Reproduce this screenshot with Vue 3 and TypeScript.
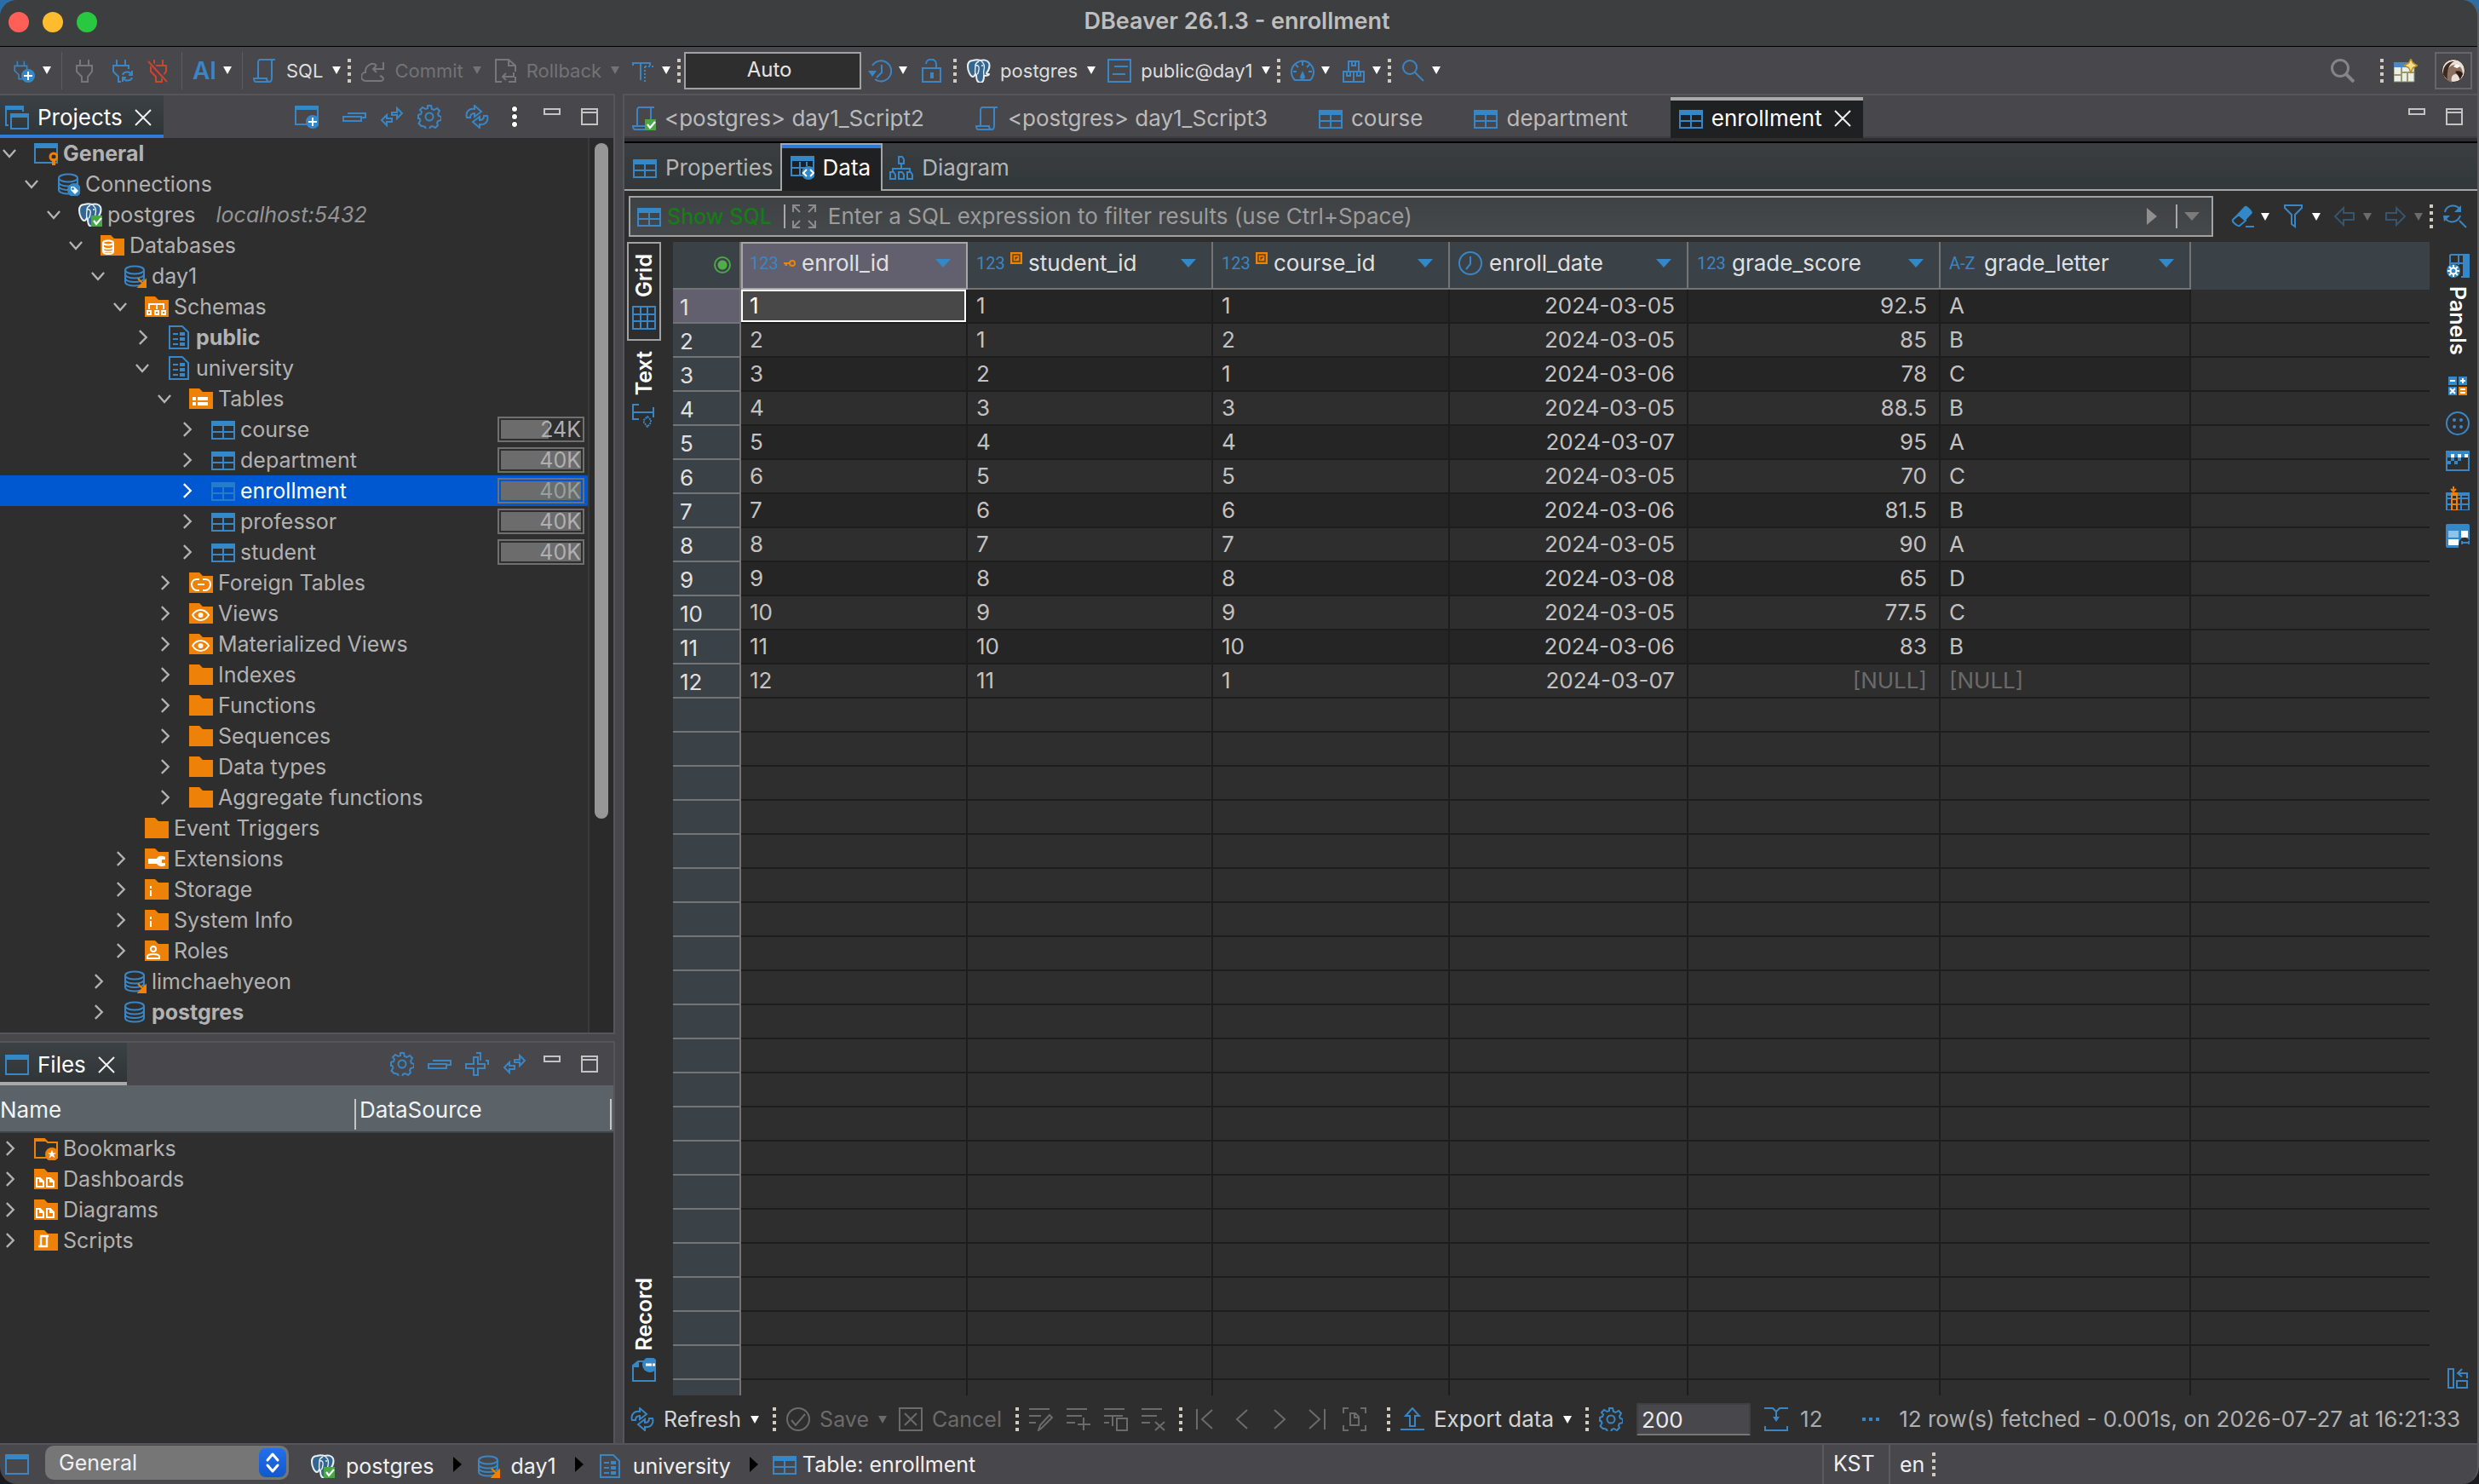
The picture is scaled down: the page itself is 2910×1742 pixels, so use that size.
<script setup lang="ts">
import { h, ref, type FunctionalComponent } from 'vue'

const Ico: FunctionalComponent<{ n: string }> = (props) =>
  h('svg', { class: 'ico', viewBox: '0 0 28 28', 'aria-hidden': 'true' }, [h('use', { href: '#i-' + props.n })])
Ico.props = ['n']

interface TreeNode {
  level: number
  open?: boolean
  leaf?: boolean
  icon: string
  text: string
  bold?: boolean
  note?: string
  size?: string
  fill?: number
  selected?: boolean
}

const tree: TreeNode[] = [
  { level: 0, open: true, icon: 'project', text: 'General', bold: true },
  { level: 1, open: true, icon: 'connections', text: 'Connections' },
  { level: 2, open: true, icon: 'pg-ok', text: 'postgres', note: 'localhost:5432' },
  { level: 3, open: true, icon: 'f-db', text: 'Databases' },
  { level: 4, open: true, icon: 'db-link', text: 'day1' },
  { level: 5, open: true, icon: 'f-schema', text: 'Schemas' },
  { level: 6, icon: 'schema', text: 'public', bold: true },
  { level: 6, open: true, icon: 'schema', text: 'university' },
  { level: 7, open: true, icon: 'f-tables', text: 'Tables' },
  { level: 8, icon: 'table', text: 'course', size: '24K', fill: 60 },
  { level: 8, icon: 'table', text: 'department', size: '40K', fill: 100 },
  { level: 8, icon: 'table', text: 'enrollment', size: '40K', fill: 100, selected: true },
  { level: 8, icon: 'table', text: 'professor', size: '40K', fill: 100 },
  { level: 8, icon: 'table', text: 'student', size: '40K', fill: 100 },
  { level: 7, icon: 'f-foreign', text: 'Foreign Tables' },
  { level: 7, icon: 'f-view', text: 'Views' },
  { level: 7, icon: 'f-view', text: 'Materialized Views' },
  { level: 7, icon: 'folder', text: 'Indexes' },
  { level: 7, icon: 'folder', text: 'Functions' },
  { level: 7, icon: 'folder', text: 'Sequences' },
  { level: 7, icon: 'folder', text: 'Data types' },
  { level: 7, icon: 'folder', text: 'Aggregate functions' },
  { level: 5, leaf: true, icon: 'folder', text: 'Event Triggers' },
  { level: 5, icon: 'f-ext', text: 'Extensions' },
  { level: 5, icon: 'f-info', text: 'Storage' },
  { level: 5, icon: 'f-info', text: 'System Info' },
  { level: 5, icon: 'f-user', text: 'Roles' },
  { level: 4, icon: 'db-link', text: 'limchaehyeon' },
  { level: 4, icon: 'db', text: 'postgres', bold: true },
]

const files = [
  { icon: 'f-bookmark', text: 'Bookmarks' },
  { icon: 'f-docs', text: 'Dashboards' },
  { icon: 'f-docs', text: 'Diagrams' },
  { icon: 'f-script', text: 'Scripts' },
]

const columns = [
  { name: 'enroll_id', type: '123', mark: 'key' },
  { name: 'student_id', type: '123', mark: 'ref' },
  { name: 'course_id', type: '123', mark: 'ref' },
  { name: 'enroll_date', type: 'date', mark: '' },
  { name: 'grade_score', type: '123', mark: '' },
  { name: 'grade_letter', type: 'A-Z', mark: '' },
]

const rows: string[][] = [
  ['1', '1', '1', '2024-03-05', '92.5', 'A'],
  ['2', '1', '2', '2024-03-05', '85', 'B'],
  ['3', '2', '1', '2024-03-06', '78', 'C'],
  ['4', '3', '3', '2024-03-05', '88.5', 'B'],
  ['5', '4', '4', '2024-03-07', '95', 'A'],
  ['6', '5', '5', '2024-03-05', '70', 'C'],
  ['7', '6', '6', '2024-03-06', '81.5', 'B'],
  ['8', '7', '7', '2024-03-05', '90', 'A'],
  ['9', '8', '8', '2024-03-08', '65', 'D'],
  ['10', '9', '9', '2024-03-05', '77.5', 'C'],
  ['11', '10', '10', '2024-03-06', '83', 'B'],
  ['12', '11', '1', '2024-03-07', '[NULL]', '[NULL]'],
]
const blankRows = 21

const filter = ref('')
const fetchSize = ref('200')
const project = ref('General')
</script>

<template>
  <svg class="defs" aria-hidden="true">
    <defs>
      <g id="elephant">
        <path d="M7 2C3 2 1 5 1 9c0 5 3 12 6 12 2 0 2-2 3-3l1 1c0 4 1 9 5 9 3 0 4-3 4-8 3 0 6-1 6-2-2 0-3 0-3-1 3-4 4-9 3-12-2-4-7-4-10-3C13 1 10 1 7 2z" fill="#336791" stroke="#e8eef4" stroke-width="2" stroke-linejoin="round" />
        <path d="M10 18c-1-4 0-6 0-10 0-2 2-4 4-5M17 3c3 2 4 6 3 10-1 3 0 4 0 7M10 8c3-1 5 1 4 5-1 3 0 4-2 5M17 8h2" fill="none" stroke="#e8eef4" stroke-width="1.4" />
      </g>
      <g id="okmark"><rect x="15" y="15" width="14" height="14" fill="#4aa843" /><path d="M18 21l3 4 6-7" fill="none" stroke="#fff" stroke-width="2.2" /></g>
      <g id="fold"><path d="M0 2h12l4 4h12v20H0z" fill="#ee8208" /></g>
      <g id="cyl" fill="none" stroke="#3a86c4" stroke-width="2">
        <ellipse cx="14" cy="7" rx="11" ry="4.6" />
        <path d="M3 7v14c0 6 22 6 22 0V7M3 12c0 6 22 6 22 0M3 16.500c0 6 22 6 22 0" />
      </g>
      <g id="tbl">
        <path d="M1 5h26v20H1zM14 10v15M1 17h26" fill="none" stroke="#3a86c4" stroke-width="2" />
        <path d="M0 4h28v6H0z" fill="#3488c8" />
      </g>
      <g id="scr"><path d="M7 1h19M22 1v21c0 3-1 5-3 5H3c-1 0-2-2-2-4h15c0 3 1 4 3 4M8 1c-1 0-2 2-2 4v18" fill="none" stroke="#3a86c4" stroke-width="2" /></g>
      <g id="gearp"><path d="M12 1h4l1 4 2.500 1 3.500-2 3 3-2 3.500 1 2.500 3 1v4l-4 1-1 2.500 1 2.500-3 3-3.500-2-2.500 1-1 3h-4l-1-3-2.500-1L4.500 25l-3-3 2-3.500L2.500 16H1v-4l3-1 1-2.500-2-2.500 3-3 3.500 2L12 4z" /><circle cx="14" cy="14" r="4.500" /></g>
      <g id="plug"><path d="M8 1v7M18 1v7M4 8h18v7l-5 6v6h-7v-6l-6-6z" fill="none" stroke-width="2" /></g>
    </defs>
    <symbol id="i-project" viewBox="0 0 28 28"><path d="M1 5h26v20H1z" fill="none" stroke="#3a86c4" stroke-width="2" /><path d="M0 2h28v6H0z" fill="#3488c8" /><circle cx="23" cy="18" r="4" fill="none" stroke="#ee8208" stroke-width="3" /><path d="M21 20h4v8h-4z" fill="#ee8208" /></symbol>
    <symbol id="i-file" viewBox="0 0 28 28"><path d="M1 5h26v20H1z" fill="none" stroke="#3a86c4" stroke-width="2" /><path d="M0 2h28v6H0z" fill="#3488c8" /></symbol>
    <symbol id="i-projects" viewBox="0 0 28 28"><path d="M4 23H1V1h20v6M7 11h20v16H7z" fill="none" stroke="#3a86c4" stroke-width="2" /><path d="M0 0h22v5H0zM6 9h22v5H6z" fill="#3488c8" /></symbol>
    <symbol id="i-newconn" viewBox="0 0 28 28"><path d="M1 4h26v19H1z" fill="none" stroke="#3a86c4" stroke-width="2" /><path d="M0 1h28v5H0z" fill="#3488c8" /><circle cx="21" cy="20" r="8" fill="#3488c8" /><path d="M21 15v10M16 20h10" stroke="#fff" stroke-width="2" /></symbol>
    <symbol id="i-connections" viewBox="0 0 28 28"><use href="#cyl" /><circle cx="21" cy="21" r="8" fill="#3488c8" /><path d="M17 17h4l5 5-4 4-5-5z" fill="#fff" /><circle cx="19.500" cy="19.500" r="1.500" fill="#3488c8" /></symbol>
    <symbol id="i-pg" viewBox="0 0 28 28"><use href="#elephant" /></symbol>
    <symbol id="i-pg-ok" viewBox="0 0 28 28"><use href="#elephant" /><use href="#okmark" /></symbol>
    <symbol id="i-db" viewBox="0 0 28 28"><use href="#cyl" /></symbol>
    <symbol id="i-db-link" viewBox="0 0 28 28"><use href="#cyl" /><path d="M18 17l7 7M28 18v9h-9z" stroke="#ee8208" stroke-width="2" fill="#ee8208" /></symbol>
    <symbol id="i-schema" viewBox="0 0 28 28"><path d="M3 1h15l7 7v19H3z" fill="none" stroke="#3a86c4" stroke-width="2" /><path d="M7 9h6v2H7zM7 15h6v2H7zM7 21h6v2H7zM15 8h6v4h-6zM15 14h6v4h-6zM15 20h6v4h-6z" fill="#3a86c4" /></symbol>
    <symbol id="i-table" viewBox="0 0 28 28"><use href="#tbl" /></symbol>
    <symbol id="i-folder" viewBox="0 0 28 28"><use href="#fold" /></symbol>
    <symbol id="i-f-db" viewBox="0 0 28 28"><use href="#fold" /><g fill="none" stroke="#fff" stroke-width="2"><ellipse cx="9" cy="11" rx="6" ry="2.500" /><path d="M3 11v10c0 4 12 4 12 0V11M3 15c0 4 12 4 12 0M3 18.500c0 4 12 4 12 0" /></g></symbol>
    <symbol id="i-f-schema" viewBox="0 0 28 28"><use href="#fold" /><path d="M5 17v-6h17v6M14 11v6M3 19h4v4H3zM12 19h4v4h-4zM20 19h4v4h-4z" fill="none" stroke="#fff" stroke-width="2" /></symbol>
    <symbol id="i-f-tables" viewBox="0 0 28 28"><use href="#fold" /><path d="M4 12h4v4H4zM10 12h12v4H10zM4 18h4v4H4zM10 18h12v4H10z" fill="#fff" /></symbol>
    <symbol id="i-f-foreign" viewBox="0 0 28 28"><use href="#fold" /><path d="M12 10H9c-3 0-6 2-6 6s3 7 6 7h3M16 10h3c3 0 6 2 6 6s-3 7-6 7h-3M10 16h8" fill="none" stroke="#fff" stroke-width="2" /></symbol>
    <symbol id="i-f-view" viewBox="0 0 28 28"><use href="#fold" /><path d="M4 16c5-8 14-8 19 0-5 8-14 8-19 0z" fill="none" stroke="#fff" stroke-width="2" /><circle cx="13.500" cy="16" r="3" fill="#fff" /></symbol>
    <symbol id="i-f-ext" viewBox="0 0 28 28"><use href="#fold" /><path d="M4 14h10c2-4 6-4 10-2v3h-4v4h4v3c-4 2-8 1-10-2H4z" fill="#fff" /></symbol>
    <symbol id="i-f-info" viewBox="0 0 28 28"><use href="#fold" /><path d="M6 10h2v3H6zM6 15h2v7H6z" fill="#fff" /></symbol>
    <symbol id="i-f-user" viewBox="0 0 28 28"><use href="#fold" /><g fill="none" stroke="#fff" stroke-width="2"><circle cx="10" cy="12" r="3" /><path d="M3 23v-2c0-4 14-4 14 0v2z" /></g></symbol>
    <symbol id="i-f-bookmark" viewBox="0 0 28 28"><path d="M1 25V3h11l4 4h11v18z" fill="none" stroke="#ee8208" stroke-width="2" /><path d="M0 2h12l4 4H0z" fill="#ee8208" /><circle cx="21" cy="21" r="8" fill="#ee8208" /><path d="M21 16l1.500 3.500H26l-3 2 1.500 4L21 23l-3.500 2.500 1.500-4-3-2h3.500z" fill="#fff" /></symbol>
    <symbol id="i-f-docs" viewBox="0 0 28 28"><use href="#fold" /><path d="M3 13h4l4 4v6H3zM15 13h4l4 4v6h-8zM7 13v4h4M19 13v4h4" fill="none" stroke="#fff" stroke-width="2" /></symbol>
    <symbol id="i-f-script" viewBox="0 0 28 28"><use href="#fold" /><path d="M7 9h10M15 9v12H5M8 9v12" fill="none" stroke="#fff" stroke-width="2.400" /></symbol>
    <symbol id="i-script" viewBox="0 0 28 28"><use href="#scr" /></symbol>
    <symbol id="i-script-ok" viewBox="0 0 28 28"><use href="#scr" /><use href="#okmark" /></symbol>
    <symbol id="i-plugnew" viewBox="0 0 28 28"><g transform="translate(0 2) scale(.8)" stroke="#3a86c4"><use href="#plug" /></g><circle cx="19" cy="20" r="8" fill="#3488c8" /><path d="M19 15v10M14 20h10" stroke="#fff" stroke-width="2" /></symbol>
    <symbol id="i-plug" viewBox="0 0 28 28"><g transform="translate(1 0)" stroke="#77777a"><use href="#plug" /></g></symbol>
    <symbol id="i-plugsync" viewBox="0 0 28 28"><g stroke="#3a86c4" fill="none" stroke-width="2"><path d="M8 1v7M18 1v7M4 14V8h18v4M4 8v7l6 6v6h3" /><path d="M15 19c1-4 8-5 10-1M26 14v5h-4M26 22c-1 4-8 5-10 1M15 27v-5h4" /></g></symbol>
    <symbol id="i-plugoff" viewBox="0 0 28 28"><g stroke="#c8482c"><use href="#plug" /></g><path d="M2 3l22 24" stroke="#48474b" stroke-width="5" /><path d="M1 3l22 24" stroke="#c8482c" stroke-width="2" /></symbol>
    <symbol id="i-commit" viewBox="0 0 28 28"><path d="M22 20c6 2 4 6 1 6H6C-2 26-1 16 5 16 4 8 14 3 18 8M26 4v8H14M18 8l-4 4 4 4" fill="none" stroke="#77777a" stroke-width="2" /></symbol>
    <symbol id="i-rollback" viewBox="0 0 28 28"><path d="M10 27H3V1h15l8 7v7M18 27h8v-6M18 1v7h8M24 16v5H11M15 17l-4 4 4 4" fill="none" stroke="#77777a" stroke-width="2" /></symbol>
    <symbol id="i-txmode" viewBox="0 0 28 28"><path d="M2 8V5h20v3M11 5v20" fill="none" stroke="#3a86c4" stroke-width="2" /><path d="M16 9h11M16 9v18" fill="none" stroke="#3a86c4" stroke-width="2" stroke-dasharray="2 2" /></symbol>
    <symbol id="i-history" viewBox="0 0 28 28"><path d="M5 8A12 12 0 1 1 8 24M16 7v9l-6 6" fill="none" stroke="#3a86c4" stroke-width="2" /><path d="M0 14h10l-5 7z" fill="#3a86c4" /></symbol>
    <symbol id="i-lock" viewBox="0 0 28 28"><path d="M4 11h21v16H4zM8 6c0-7 12-7 12 0v5" fill="none" stroke="#3a86c4" stroke-width="2" /><path d="M13 16h4v7h-4z" fill="#3a86c4" /></symbol>
    <symbol id="i-catalog" viewBox="0 0 28 28"><path d="M1 1h26v26H1zM8 9h16M6 18h15" fill="none" stroke="#3a86c4" stroke-width="2" /></symbol>
    <symbol id="i-gauge" viewBox="0 0 28 28"><path d="M5 25a13 13 0 1 1 18 0zM14 3v5M3 15h4M25 15h-4M6 7l3 3M22 7l-3 3" fill="none" stroke="#3a86c4" stroke-width="2" /><path d="M14 14l3 7a3 3 0 1 1-6 0z" fill="#3a86c4" /></symbol>
    <symbol id="i-boxes" viewBox="0 0 28 28"><path d="M8 3h12v12H8zM2 15h24v12H2zM14 15v12M12 3v5h4V3M6 15v5h4v-5M18 15v5h4v-5" fill="none" stroke="#3a86c4" stroke-width="2" /></symbol>
    <symbol id="i-search" viewBox="0 0 28 28"><circle cx="10" cy="10" r="8" fill="none" stroke="#3a86c4" stroke-width="2" /><path d="M16 16l10 10" stroke="#3a86c4" stroke-width="2" /></symbol>
    <symbol id="i-searchgray" viewBox="0 0 28 28"><circle cx="11" cy="11" r="9.500" fill="none" stroke="#858588" stroke-width="3" /><path d="M18 18l9 9" stroke="#858588" stroke-width="4" /></symbol>
    <symbol id="i-perspective" viewBox="0 0 28 28"><path d="M0 6h24v21H0z" fill="#e9efe6" stroke="#7e8a70" /><path d="M0 4h24v6H0z" fill="#4a86c8" /><path d="M9 10v17M9 16h15M0 19h9M16 16v11" stroke="#9c9a6a" stroke-width="2" /><path d="M20 0l2.500 5L28 8l-5.500 2.500L20 16l-2.500-5.500L12 8l5.500-3z" fill="#f7dc8a" stroke="#b98a1c" stroke-width="1.500" /></symbol>
    <symbol id="i-beaver" viewBox="0 0 28 28"><circle cx="14" cy="14" r="13.500" fill="#e9dfd6" stroke="#3b2a22" /><path d="M8 26C4 18 7 8 15 7c7-1 10 6 10 11l-4 7c0-5-2-7-5-7-4 1-5 4-4 10z" fill="#8b6f60" /><path d="M2 19C1 9 7 3 15 3c-6 3-9 10-8 22z" fill="#3a2a22" /><path d="M16 15c4-2 8 0 9 3l-3 6-3-5z" fill="#2a1d18" /><path d="M14 9c2-3 6-3 8 0l-4 2z" fill="#fff" /></symbol>
    <symbol id="i-collapse" viewBox="0 0 28 28"><path d="M1 14h21v5H1zM6 10h21v5h-4" fill="none" stroke="#3a86c4" stroke-width="2" /></symbol>
    <symbol id="i-expand" viewBox="0 0 28 28"><path d="M10 6h5v8h8v5h-8v8h-5v-8H1v-5h9zM13 1h5v9M24 10h3v5" fill="none" stroke="#3a86c4" stroke-width="2" /></symbol>
    <symbol id="i-link" viewBox="0 0 28 28"><path d="M14 12V9h6V4l6 6-6 6v-4zM14 16v4H8v4l-6-6 6-6v4z" fill="none" stroke="#3a86c4" stroke-width="2" /></symbol>
    <symbol id="i-gear" viewBox="0 0 28 28"><use href="#gearp" fill="none" stroke="#3a86c4" stroke-width="2" /></symbol>
    <symbol id="i-refresh" viewBox="0 0 28 28"><path d="M2 15C0 8 5 4 11 5V1l8 7-8 6v-4c-4 0-5 2-5 5zM26 13c2 7-3 11-9 10v4l-8-7 8-6v4c4 0 5-2 5-5z" fill="none" stroke="#3a86c4" stroke-width="2" /></symbol>
    <symbol id="i-kebab" viewBox="0 0 28 28"><g fill="#fff" stroke="#111" stroke-width="1"><circle cx="14" cy="4" r="4" /><circle cx="14" cy="14" r="4" /><circle cx="14" cy="24" r="4" /></g></symbol>
    <symbol id="i-min" viewBox="0 0 28 28"><path d="M5 5h18v6H5z" fill="none" stroke="#c4c4c4" stroke-width="2" /></symbol>
    <symbol id="i-max" viewBox="0 0 28 28"><path d="M5 5h18v18H5zM5 9h18" fill="none" stroke="#c4c4c4" stroke-width="2" /></symbol>
    <symbol id="i-close" viewBox="0 0 28 28"><path d="M5 5l18 18M23 5L5 23" fill="none" stroke="#f0f0f0" stroke-width="2" /></symbol>
    <symbol id="i-data" viewBox="0 0 28 28"><path d="M1 1h26v22H1zM11 7v16M19 7v5M1 14h26" fill="none" stroke="#3a86c4" stroke-width="2" /><path d="M0 0h28v6H0z" fill="#3488c8" /><circle cx="21" cy="20" r="8" fill="#3488c8" /><path d="M19 16l-4 4 4 4M23 16l4 4-4 4" fill="none" stroke="#fff" stroke-width="2" /></symbol>
    <symbol id="i-diagram" viewBox="0 0 28 28"><path d="M11 1h4l2 3v5h-6zM14 9v5M4 18v-3h20v3M1 19h4l2 3v5H1zM11 19h4l2 3v5h-6zM21 19h4l2 3v5h-6z" fill="none" stroke="#3a86c4" stroke-width="2" /></symbol>
    <symbol id="i-corners" viewBox="0 0 28 28"><path d="M1 9V1h8M1 1l8 8M19 1h8v8M27 1l-8 8M1 19v8h8M1 27l8-8M27 19v8h-8M27 27l-8-8" fill="none" stroke="#8c8c8c" stroke-width="2" /></symbol>
    <symbol id="i-eraser" viewBox="0 0 28 28"><path d="M2 18L17 2c2-2 9 5 9 8L12 25c-3 2-11-3-10-7z" fill="#3488c8" /><path d="M10 12l8 7-7 6c-2 1-9-4-8-7z" fill="#2e2e2e" stroke="#3488c8" stroke-width="2" /><path d="M18 26h10" stroke="#3488c8" stroke-width="2" /></symbol>
    <symbol id="i-funnel" viewBox="0 0 28 28"><path d="M4 1h20v3l-8 8v14l-4-3V12L4 4z" fill="none" stroke="#3a86c4" stroke-width="2" /></symbol>
    <symbol id="i-back" viewBox="0 0 28 28"><path d="M3 14L13 4v6h12v8H13v6z" fill="none" stroke="#36546e" stroke-width="2" /></symbol>
    <symbol id="i-fwd" viewBox="0 0 28 28"><path d="M25 14L15 4v6H3v8h12v6z" fill="none" stroke="#36546e" stroke-width="2" /></symbol>
    <symbol id="i-resync" viewBox="0 0 28 28"><path d="M2 9C4 0 15-1 20 6M20 13c-3 9-13 9-17 4M19 19l8 8" fill="none" stroke="#3a86c4" stroke-width="2" /><path d="M21 1v8h-8zM0 13h8l-7 7z" fill="#3a86c4" /></symbol>
    <symbol id="i-grid" viewBox="0 0 28 28"><path d="M1 1h26v26H1zM10 1v26M18 1v26M1 10h26M1 18h26" fill="none" stroke="#3a86c4" stroke-width="2" /></symbol>
    <symbol id="i-textmode" viewBox="0 0 28 28"><path d="M8 1H1v17h7M1 10h24M25 4v12" fill="none" stroke="#3a86c4" stroke-width="2" /><path d="M18 15l4 4v3l-4 5-4-5v-3z" fill="none" stroke="#3a86c4" stroke-width="2" stroke-dasharray="2 1" /></symbol>
    <symbol id="i-record" viewBox="0 0 28 28"><path d="M1 27V9l6-5h20v23z" fill="none" stroke="#3a86c4" stroke-width="2" /><path d="M0 11l8-8v8z" fill="#3488c8" /><circle cx="21" cy="8" r="9" fill="#3488c8" /><path d="M16 8h7M24 8h3" stroke="#fff" stroke-width="3" /></symbol>
    <symbol id="i-panels" viewBox="0 0 28 28"><path d="M5 1h22v26h-9M5 1v14M15 1v12M5 11h16M21 1v26" fill="none" stroke="#3a86c4" stroke-width="2" /><path d="M22 0h6v28h-6z" fill="#3488c8" /><circle cx="9" cy="20" r="8" fill="#3488c8" /><circle cx="9" cy="20" r="3.500" fill="none" stroke="#fff" stroke-width="2" /><path d="M9 13v3M9 24v3M2 20h3M13 20h3M4 15l2 2M12 23l2 2M14 15l-2 2M6 23l-2 2" stroke="#fff" stroke-width="2" /></symbol>
    <symbol id="i-calc" viewBox="0 0 28 28"><path d="M3 3h10v10H3zM15 3h10v10H15zM3 15h10v10H3z" fill="#3488c8" /><path d="M15 15h10v10H15z" fill="#ee8208" /><path d="M5 8h6M17 8h6M20 5v6M5 17l6 6M11 17l-6 6M17 18h6M17 22h6" stroke="#fff" stroke-width="2" /></symbol>
    <symbol id="i-group" viewBox="0 0 28 28"><circle cx="14" cy="14" r="13" fill="none" stroke="#3a86c4" stroke-width="2" /><g fill="#3a86c4"><circle cx="10" cy="10" r="2" /><circle cx="18" cy="10" r="2" /><circle cx="10" cy="18" r="2" /><circle cx="18" cy="18" r="2" /></g></symbol>
    <symbol id="i-meta" viewBox="0 0 28 28"><path d="M1 3h26v22H1z" fill="none" stroke="#3a86c4" stroke-width="2" /><path d="M0 2h28v8H0z" fill="#3488c8" /><path d="M6 6h4v4H6zM14 6h4v4h-4zM22 6h4v4h-4z" fill="#fff" /><path d="M2 14h4v4H2zM6 10h4v4H6zM10 14h4v4h-4zM14 10h4v4h-4z" fill="#3488c8" /></symbol>
    <symbol id="i-colref" viewBox="0 0 28 28"><path d="M1 8h26v20H1zM18 8v20M1 14h26M1 21h26" fill="none" stroke="#3a86c4" stroke-width="2" /><path d="M0 7h28v4H0z" fill="#3488c8" /><path d="M7 8h6v20H7zM7 15h6M7 21h6" fill="#2e2e2e" stroke="#ee8208" stroke-width="2" /><path d="M7 7h6v4H7z" fill="#ee8208" /><path d="M9-2v7M6 3l3 3 3-3" fill="none" stroke="#ee8208" stroke-width="2" /></symbol>
    <symbol id="i-layout" viewBox="0 0 28 28"><rect width="28" height="28" rx="2" fill="#3488c8" /><path d="M3 8h12v8H3z" fill="#8fc4ea" /><path d="M18 8h8v8h-8zM3 18h12v7H3z" fill="#fff" /><path d="M15 28c-1-16 13-14 13-6v6z" fill="#2e2e2e" /><path d="M19 20v4M27 20v4M19 22h8" stroke="#3a86c4" stroke-width="2" /></symbol>
    <symbol id="i-panelout" viewBox="0 0 28 28"><path d="M3 3h6v22H3zM13 17h12v8H13zM25 14V8H15M19 3l-5 5 5 4" fill="none" stroke="#3a86c4" stroke-width="2" /></symbol>
    <symbol id="i-clock" viewBox="0 0 28 28"><circle cx="14" cy="14" r="13" fill="none" stroke="#3a86c4" stroke-width="2" /><path d="M14 6v9l-5 6" fill="none" stroke="#3a86c4" stroke-width="2" /></symbol>
    <symbol id="i-key" viewBox="0 0 28 28"><circle cx="20" cy="14" r="6" fill="none" stroke="#ee8208" stroke-width="4" /><path d="M0 12h14v4H0zM3 14h5v6H3z" fill="#ee8208" /></symbol>
    <symbol id="i-ref" viewBox="0 0 28 28"><path d="M0 0h28v28H0z" fill="#ee8208" /><path d="M6 6h16v16H6z" fill="none" stroke="#6b3f10" stroke-width="3" /><path d="M11 11h8l-8 8z" fill="#6b3f10" /></symbol>
    <symbol id="i-check" viewBox="0 0 28 28"><circle cx="14" cy="14" r="13" fill="none" stroke="#6b6b6b" stroke-width="2" /><path d="M6 15l5 6L22 8" fill="none" stroke="#6b6b6b" stroke-width="2" /></symbol>
    <symbol id="i-cancel" viewBox="0 0 28 28"><path d="M1 1h26v26H1zM7 7l14 14M21 7L7 21" fill="none" stroke="#6b6b6b" stroke-width="2" /></symbol>
    <symbol id="i-rowedit" viewBox="0 0 28 28"><path d="M0 2h24M0 10h14M0 18h8M11 27l2-6L24 9l3 3-12 12z" fill="none" stroke="#6b6b6b" stroke-width="2" /></symbol>
    <symbol id="i-rowadd" viewBox="0 0 28 28"><path d="M0 2h24M0 10h18M0 18h10M20 12v15M13 20h15" fill="none" stroke="#6b6b6b" stroke-width="2" /></symbol>
    <symbol id="i-rowcopy" viewBox="0 0 28 28"><path d="M0 2h24M0 10h18M0 18h6M10 22V10h12M15 13h12v14H15z" fill="none" stroke="#6b6b6b" stroke-width="2" /></symbol>
    <symbol id="i-rowdel" viewBox="0 0 28 28"><path d="M0 2h24M0 10h18M0 18h10M16 17l11 10M27 17L16 27" fill="none" stroke="#6b6b6b" stroke-width="2" /></symbol>
    <symbol id="i-first" viewBox="0 0 28 28"><path d="M5 2v24M23 3L11 14l12 11" fill="none" stroke="#6b6b6b" stroke-width="2" /></symbol>
    <symbol id="i-prev" viewBox="0 0 28 28"><path d="M20 3L8 14l12 11" fill="none" stroke="#6b6b6b" stroke-width="2" /></symbol>
    <symbol id="i-next" viewBox="0 0 28 28"><path d="M8 3l12 11L8 25" fill="none" stroke="#6b6b6b" stroke-width="2" /></symbol>
    <symbol id="i-last" viewBox="0 0 28 28"><path d="M23 2v24M5 3l12 11L5 25" fill="none" stroke="#6b6b6b" stroke-width="2" /></symbol>
    <symbol id="i-fetchpage" viewBox="0 0 28 28"><path d="M7 1H1v6M21 1h6v6M1 21v6h6M27 21v6h-6M9 7h6l4 4v10H9zM14 7v5h5" fill="none" stroke="#6b6b6b" stroke-width="2" /></symbol>
    <symbol id="i-export" viewBox="0 0 28 28"><path d="M0 26h28M11 22V10H6l8-9 8 9h-5v12z" fill="none" stroke="#3a86c4" stroke-width="2" /></symbol>
    <symbol id="i-fetch" viewBox="0 0 28 28"><path d="M0 1h10l4 4 4-4h10M14 5v9M1 22v5h26v-5" fill="none" stroke="#3a86c4" stroke-width="2" /><path d="M10 11h8l-4 6z" fill="#3a86c4" /></symbol>
    <symbol id="i-more" viewBox="0 0 28 28"><path d="M4 12h4v4H4zM12 12h4v4h-4zM20 12h4v4h-4z" fill="#3a86c4" /></symbol>
    <symbol id="i-down" viewBox="0 0 28 28"><path d="M5 9l9 10 9-10" fill="none" stroke="#b4b4b4" stroke-width="3" /></symbol>
    <symbol id="i-right" viewBox="0 0 28 28"><path d="M10 4l10 10-10 10" fill="none" stroke="currentColor" stroke-width="3" /></symbol>
  </svg>

  <div class="window">
    <header class="titlebar">
      <div class="lights"><i class="red"></i><i class="yellow"></i><i class="green"></i></div>
      <h1>DBeaver 26.1.3 - enrollment</h1>
    </header>

    <div class="toolbar">
      <button class="b" aria-label="New connection"><Ico n="plugnew" /><i class="dd"></i></button>
      <i class="sep"></i>
      <button class="b plain" aria-label="Connect"><Ico n="plug" /></button>
      <button class="b plain" aria-label="Reconnect"><Ico n="plugsync" /></button>
      <button class="b plain" aria-label="Disconnect"><Ico n="plugoff" /></button>
      <i class="sep"></i>
      <button class="b"><span class="ai">AI</span><i class="dd"></i></button>
      <i class="sep"></i>
      <button class="b lbl"><Ico n="script" />SQL<i class="dd"></i></button>
      <i class="dots"></i>
      <button class="b lbl off"><Ico n="commit" />Commit<i class="dd"></i></button>
      <button class="b lbl off"><Ico n="rollback" />Rollback<i class="dd"></i></button>
      <button class="b" aria-label="Transaction mode"><Ico n="txmode" /><i class="dd"></i></button>
      <i class="dots"></i>
      <button class="mode">Auto</button>
      <button class="b" aria-label="Transaction log"><Ico n="history" /><i class="dd"></i></button>
      <button class="b" aria-label="Read only"><Ico n="lock" /></button>
      <i class="dots lone"></i>
      <button class="b lbl"><Ico n="pg" />postgres<i class="dd"></i></button>
      <button class="b lbl"><Ico n="catalog" />public@day1<i class="dd"></i></button>
      <i class="dots"></i>
      <button class="b" aria-label="Dashboard"><Ico n="gauge" /><i class="dd"></i></button>
      <button class="b" aria-label="Tools"><Ico n="boxes" /><i class="dd"></i></button>
      <i class="dots"></i>
      <button class="b" aria-label="Search"><Ico n="search" /><i class="dd"></i></button>
      <span class="grow"></span>
      <button class="b find" aria-label="Find"><Ico n="searchgray" /></button>
      <i class="dots lone"></i>
      <button class="b" aria-label="Open perspective"><Ico n="perspective" /></button>
      <button class="persp" aria-label="DBeaver perspective"><Ico n="beaver" /></button>
    </div>

    <div class="body">
      <aside class="side">
        <section class="panel projects">
          <div class="phead">
            <div class="ptab focus"><Ico n="projects" />Projects<button aria-label="Close Projects"><Ico n="close" /></button></div>
            <div class="ptools">
              <button aria-label="New connection"><Ico n="newconn" /></button>
              <button class="wide" aria-label="Collapse all"><Ico n="collapse" /></button>
              <button aria-label="Link with editor"><Ico n="link" /></button>
              <button aria-label="Configure"><Ico n="gear" /></button>
              <button class="wide" aria-label="Refresh"><Ico n="refresh" /></button>
              <button aria-label="View menu"><Ico n="kebab" class="keb" /></button>
              <button aria-label="Minimize"><Ico n="min" /></button>
              <button aria-label="Maximize"><Ico n="max" /></button>
            </div>
          </div>
          <div class="treewrap">
            <ul class="tree" role="tree">
              <li v-for="(node, i) in tree" :key="i" class="trow" role="treeitem" :class="{ sel: node.selected }" :style="{ paddingLeft: node.level * 26 + 'px' }">
                <span class="chev"><Ico v-if="!node.leaf" :n="node.open ? 'down' : 'right'" /></span>
                <Ico :n="node.icon" :class="{ faded: node.selected }" />
                <span class="tname" :class="{ bold: node.bold }">{{ node.text }}</span>
                <em v-if="node.note">{{ node.note }}</em>
                <span v-if="node.size" class="size">
                  <i class="fill" :style="{ width: node.fill + '%' }"></i>
                  <span>{{ node.size }}</span>
                </span>
              </li>
            </ul>
            <div class="gutter"><div class="thumb"></div></div>
          </div>
        </section>

        <section class="panel files">
          <div class="phead">
            <div class="ptab"><Ico n="file" />Files<button aria-label="Close Files"><Ico n="close" /></button></div>
            <div class="ptools">
              <button aria-label="Configure"><Ico n="gear" /></button>
              <button aria-label="Collapse all"><Ico n="collapse" /></button>
              <button aria-label="Expand all"><Ico n="expand" /></button>
              <button aria-label="Link with editor"><Ico n="link" /></button>
              <button aria-label="Minimize"><Ico n="min" /></button>
              <button aria-label="Maximize"><Ico n="max" /></button>
            </div>
          </div>
          <div class="fhead"><span class="fname">Name</span><span class="fsrc">DataSource</span></div>
          <ul class="tree">
            <li v-for="f in files" :key="f.text" class="trow">
              <span class="chev"><Ico n="right" /></span>
              <Ico :n="f.icon" />
              <span class="tname">{{ f.text }}</span>
            </li>
          </ul>
        </section>
      </aside>

      <main class="editor">
        <nav class="tabs">
          <button class="tab"><Ico n="script-ok" />&lt;postgres&gt; day1_Script2</button>
          <button class="tab"><Ico n="script" />&lt;postgres&gt; day1_Script3</button>
          <button class="tab"><Ico n="table" />course</button>
          <button class="tab"><Ico n="table" />department</button>
          <button class="tab active"><Ico n="table" />enrollment<Ico n="close" /></button>
          <span class="grow"></span>
          <button class="win" aria-label="Minimize"><Ico n="min" /></button>
          <button class="win" aria-label="Maximize"><Ico n="max" /></button>
        </nav>

        <nav class="subtabs">
          <button class="sub"><Ico n="table" />Properties</button>
          <button class="sub on"><Ico n="data" />Data</button>
          <button class="sub"><Ico n="diagram" />Diagram</button>
        </nav>

        <div class="filterbar">
          <div class="filter">
            <Ico n="table" />
            <button class="show">Show SQL</button>
            <i class="bar"></i>
            <Ico n="corners" />
            <input v-model="filter" type="text" aria-label="Filter expression" placeholder="Enter a SQL expression to filter results (use Ctrl+Space)" />
            <button class="play" aria-label="Apply filter"></button>
            <i class="bar"></i>
            <button class="drop" aria-label="Filter history"></button>
          </div>
          <button class="b" aria-label="Remove filters"><Ico n="eraser" /><i class="dd"></i></button>
          <button class="b" aria-label="Filters"><Ico n="funnel" /><i class="dd"></i></button>
          <button class="b off" aria-label="Back"><Ico n="back" /><i class="dd"></i></button>
          <button class="b off" aria-label="Forward"><Ico n="fwd" /><i class="dd"></i></button>
          <i class="dots"></i>
          <button class="b" aria-label="Auto refresh"><Ico n="resync" /></button>
        </div>

        <div class="result">
          <div class="modes">
            <button class="vt on"><span>Grid</span><Ico n="grid" /></button>
            <button class="vt"><span>Text</span><Ico n="textmode" /></button>
            <button class="vt rec"><span>Record</span><Ico n="record" /></button>
          </div>

          <div class="gridwrap">
            <table class="grid">
              <colgroup>
                <col class="c0" /><col class="c1" /><col class="c2" /><col class="c3" /><col class="c4" /><col class="c5" /><col class="c6" /><col />
              </colgroup>
              <thead>
                <tr>
                  <th class="corner"><i class="radio"></i></th>
                  <th v-for="(c, i) in columns" :key="c.name" :class="{ cur: i === 0 }">
                    <div class="hc">
                      <Ico v-if="c.type === 'date'" n="clock" />
                      <span v-else class="type">{{ c.type }}</span>
                      <Ico v-if="c.mark" :n="c.mark" class="mark" :class="c.mark" />
                      <span class="cname">{{ c.name }}</span>
                      <i class="sort"></i>
                    </div>
                  </th>
                  <th class="rest"></th>
                </tr>
              </thead>
              <tbody>
                <tr v-for="(r, ri) in rows" :key="r[0]" :class="{ odd: ri % 2 === 0 }">
                  <th scope="row" :class="{ cur: ri === 0 }">{{ ri + 1 }}</th>
                  <td v-for="(v, ci) in r" :key="ci" :class="{ num: ci === 3 || ci === 4, nil: v === '[NULL]', focus: ri === 0 && ci === 0 }">{{ v }}</td>
                  <td class="rest"></td>
                </tr>
                <tr v-for="n in blankRows" :key="'b' + n">
                  <th></th>
                  <td v-for="c in 6" :key="c"></td>
                  <td class="rest"></td>
                </tr>
              </tbody>
            </table>
          </div>

          <div class="panels">
            <button class="vt"><Ico n="panels" /><span>Panels</span></button>
            <button aria-label="Calc"><Ico n="calc" /></button>
            <button aria-label="Grouping"><Ico n="group" /></button>
            <button aria-label="Metadata"><Ico n="meta" /></button>
            <button aria-label="References"><Ico n="colref" /></button>
            <button aria-label="Layout"><Ico n="layout" /></button>
            <button class="last" aria-label="Move panels"><Ico n="panelout" /></button>
          </div>
        </div>

        <div class="actions">
          <button class="b lbl"><Ico n="refresh" />Refresh<i class="dd"></i></button>
          <i class="dots"></i>
          <button class="b lbl off"><Ico n="check" />Save<i class="dd"></i></button>
          <button class="b lbl off"><Ico n="cancel" />Cancel</button>
          <i class="dots"></i>
          <button class="b plain" aria-label="Edit row"><Ico n="rowedit" /></button>
          <button class="b plain" aria-label="Add row"><Ico n="rowadd" /></button>
          <button class="b plain" aria-label="Duplicate row"><Ico n="rowcopy" /></button>
          <button class="b plain" aria-label="Delete row"><Ico n="rowdel" /></button>
          <i class="dots"></i>
          <button class="b plain" aria-label="First row"><Ico n="first" /></button>
          <button class="b plain" aria-label="Previous row"><Ico n="prev" /></button>
          <button class="b plain" aria-label="Next row"><Ico n="next" /></button>
          <button class="b plain" aria-label="Last row"><Ico n="last" /></button>
          <button class="b plain" aria-label="Fetch page"><Ico n="fetchpage" /></button>
          <i class="dots far"></i>
          <button class="b lbl big"><Ico n="export" />Export data<i class="dd"></i></button>
          <i class="dots"></i>
          <button class="b" aria-label="Settings"><Ico n="gear" /></button>
          <input v-model="fetchSize" class="fetch big" type="text" aria-label="Fetch size" />
          <button class="b lbl count big"><Ico n="fetch" />12</button>
          <span class="grow"></span>
          <Ico n="more" />
          <output class="msg big">12 row(s) fetched - 0.001s, on 2026-07-27 at 16:21:33</output>
        </div>
      </main>
    </div>

    <footer class="status">
      <Ico n="file" />
      <label class="combo">
        <select v-model="project" aria-label="Active project"><option>General</option></select>
        <i class="step"><svg viewBox="0 0 32 34"><path d="M10 14l6-7 6 7M10 20l6 7 6-7" fill="none" stroke="#fff" stroke-width="3" stroke-linecap="round" stroke-linejoin="round" /></svg></i>
      </label>
      <a class="crumb" href="#"><Ico n="pg-ok" />postgres</a><i class="tri"></i>
      <a class="crumb" href="#"><Ico n="db-link" />day1</a><i class="tri"></i>
      <a class="crumb" href="#"><Ico n="schema" />university</a><i class="tri"></i>
      <a class="crumb end" href="#"><Ico n="table" />Table: enrollment</a>
      <span class="grow"></span>
      <span class="cell tz">KST</span>
      <span class="cell lang">en<i class="dots"></i></span>
    </footer>
  </div>
</template>

<style>
body {
  background: linear-gradient(#2b6da5 50%, #1b1b1d 50%);
}
</style>

<style scoped>
.defs {
  position: absolute;
  width: 0;
  height: 0;
}
.window {
  box-sizing: border-box;
  height: 100vh;
  display: flex;
  flex-direction: column;
  overflow: hidden;
  border-radius: 20px;
  border-right: 2px solid #5c5c5e;
  background: #48474b;
  font-family: Inter, "Liberation Sans", sans-serif;
  font-size: 25px;
  line-height: 36px;
  color: #b2b2b2;
}
.window *,
.window *::before {
  box-sizing: border-box;
}
button,
input,
select {
  font: inherit;
  color: inherit;
  margin: 0;
  padding: 0;
  border: 0;
  background: none;
  border-radius: 0;
  outline: none;
}
ul {
  list-style: none;
  margin: 0;
  padding: 0;
}
.ico {
  width: 28px;
  height: 28px;
  flex: none;
  display: block;
  overflow: visible;
}
.grow {
  flex: 1;
}
.big {
  font-size: 26px;
}

/* title bar */
.titlebar {
  position: relative;
  flex: none;
  height: 55px;
  background: #3d3e3f;
  border-bottom: 1px solid #000;
  display: flex;
  align-items: center;
  justify-content: center;
}
.titlebar h1 {
  margin: 0;
  padding: 0 4px 4px 0;
  font-size: 27px;
  font-weight: 600;
  color: #bebebf;
}
.lights {
  position: absolute;
  left: 10px;
  top: 14px;
  display: flex;
  gap: 16px;
}
.lights i {
  width: 24px;
  height: 24px;
  border-radius: 50%;
}
.red {
  background: #ff5f57;
}
.yellow {
  background: #febc2e;
}
.green {
  background: #28c840;
}

/* toolbar */
.toolbar {
  flex: none;
  height: 55px;
  display: flex;
  align-items: center;
  gap: 12px;
  padding: 0 6px 0 14px;
  font-size: 22px;
  color: #dedede;
}
.b {
  display: flex;
  align-items: center;
  gap: 8px;
  white-space: nowrap;
}
.b.lbl {
  gap: 11px;
}
.b + .b {
  margin-left: 2px;
}
.plain + .plain {
  margin-left: 4px;
}
.dd {
  flex: none;
  border: 5px solid transparent;
  border-top: 9px solid #fff;
  border-bottom: 0;
}
.off {
  color: #737375;
}
.off .dd {
  border-top-color: #737375;
}
.sep {
  width: 1px;
  height: 44px;
  background: #5d5d60;
}
.dots {
  flex: none;
  width: 4px;
  height: 28px;
  margin-left: -4px;
  background: repeating-linear-gradient(#cfccbf 0 4px, transparent 4px 8px);
}
.dots.lone {
  margin-left: 0;
}
.ai {
  width: 28px;
  font-size: 28px;
  font-weight: 600;
  text-align: center;
  color: #3a86c4;
}
.mode {
  width: 208px;
  height: 44px;
  margin: 0 -4px 0 -8px;
  padding: 0 8px 2px 0;
  border: 2px solid #a2a2a2;
  background: #2e2e2e;
  font-size: 24px;
  color: #e4e4e4;
}
.find {
  margin-right: 18px;
}
.persp {
  width: 44px;
  height: 44px;
  margin-left: 8px;
  border: 2px solid #66666a;
  display: grid;
  place-items: center;
}

/* body */
.body {
  flex: 1;
  min-height: 0;
  display: flex;
  gap: 9px;
}
.side {
  flex: none;
  width: 722px;
  display: flex;
  flex-direction: column;
  gap: 8px;
}
.panel {
  border: 2px solid #56565a;
  border-left: 0;
  background: #2e2e2e;
  display: flex;
  flex-direction: column;
  min-height: 0;
  overflow: hidden;
}
.projects {
  flex: 1;
}
.files {
  height: 474px;
}
.phead {
  flex: none;
  height: 50px;
  display: flex;
  justify-content: space-between;
  background: #48474b;
}
.ptab {
  height: 50px;
  padding: 5px 10px 0 6px;
  display: flex;
  align-items: center;
  gap: 10px;
  color: #fff;
  background: linear-gradient(#3b4144, #303538);
  border-bottom: 4px solid #a9a9a9;
}
.ptab,
.fhead {
  font-size: 26px;
}
.focus {
  border-bottom-color: #2f7bd8;
}
.ptools {
  display: flex;
  align-items: center;
  gap: 16px;
  padding: 0 14px 0 0;
}
.wide {
  margin-left: 12px;
}
.keb {
  transform: scale(0.9);
}
.treewrap {
  flex: 1;
  min-height: 0;
  display: flex;
}
.treewrap .tree {
  flex: 1;
}
.gutter {
  width: 30px;
  border-left: 2px solid #3a3a3a;
  background: #2a2a2a;
  padding: 6px 6px 0;
}
.thumb {
  width: 16px;
  height: 76%;
  border-radius: 8px;
  background: #979797;
}
.trow {
  height: 36px;
  display: flex;
  align-items: center;
  white-space: nowrap;
}
.chev {
  width: 40px;
  flex: none;
}
.chev .ico {
  width: 22px;
  height: 22px;
}
.tname {
  margin-left: 6px;
}
.bold {
  font-weight: 700;
}
.trow em {
  margin-left: 24px;
  color: #949494;
}
.sel {
  background: #0058d0;
  color: #fff;
}
.faded {
  opacity: 0.75;
}
.size {
  position: relative;
  width: 102px;
  height: 30px;
  margin: 0 4px 0 auto;
  padding: 2px;
  border: 2px solid #707070;
  display: flex;
  justify-content: flex-end;
  align-items: center;
  color: #b0b0b0;
}
.size .fill {
  height: 22px;
  margin-right: auto;
  background: #6c6c6c;
}
.size span {
  position: absolute;
  right: 2px;
}
.sel .size {
  color: #93a39f;
}
.fhead {
  flex: none;
  height: 56px;
  padding-top: 10px;
  border-bottom: 2px solid #3e4447;
  background: #5b6369;
  color: #f2f2f2;
  display: flex;
}
.fname {
  width: 418px;
  border-right: 2px solid #c5c5c5;
}
.fsrc {
  flex: 1;
  padding-left: 4px;
  border-right: 2px solid #c5c5c5;
  margin-right: 2px;
}
.fname,
.fsrc {
  height: 36px;
  margin-top: 6px;
  line-height: 26px;
}

/* editor */
.editor {
  flex: 1;
  min-width: 0;
  display: flex;
  flex-direction: column;
  background: #2e2e2e;
  border: 2px solid #56565a;
  border-right: 0;
}
.tabs {
  flex: none;
  height: 50px;
  padding: 2px 13px 0 9px;
  display: flex;
  background: #48474b;
  border-bottom: 2px solid #3e3e42;
  font-size: 26px;
}
.tab {
  display: flex;
  align-items: center;
  gap: 10px;
  padding: 3px 10px 0;
  margin-right: 40px;
  color: #bababa;
  white-space: nowrap;
}
.tab:first-child {
  padding-left: 0;
}
.tab.active {
  height: 48px;
  margin: 0;
  border-top: 4px solid #a9a9a9;
  padding-top: 0;
  padding-bottom: 3px;
  background: #1f2022;
  color: #fff;
}
.win {
  align-self: center;
  margin-left: 16px;
}
.subtabs {
  flex: none;
  height: 58px;
  margin-top: 4px;
  margin-bottom: 6px;
  padding-left: 10px;
  border-top: 2px solid #000;
  display: flex;
  background: linear-gradient(#3a3e40, #32373a);
  box-shadow: inset 0 -2px #a5a5a5;
  font-size: 26px;
}
.sub {
  display: flex;
  align-items: center;
  gap: 10px;
  padding-top: 2px;
  padding-right: 8px;
  color: #b4b4b4;
}
.sub.on {
  padding: 0 12px 0 10px;
  border: 2px solid #a5a5a5;
  border-bottom: 0;
  background: linear-gradient(#2f7bd8 4px, #1f2022 4px);
  color: #fff;
  margin-right: 8px;
}
.filterbar {
  flex: none;
  height: 48px;
  margin-bottom: 6px;
  padding: 0 12px 0 5px;
  display: flex;
  align-items: center;
  gap: 12px;
}
.filter {
  flex: 1;
  height: 48px;
  margin-right: 8px;
  padding: 0 14px 0 8px;
  border: 2px solid #a2a2a2;
  background: linear-gradient(#3f4244, #45494b);
  display: flex;
  align-items: center;
}
.show {
  margin: 0 14px 0 7px;
  font-weight: 500;
  color: #167c16;
}
.bar {
  width: 2px;
  height: 28px;
  background: #a8a8a8;
}
.bar + .ico {
  margin-left: 8px;
}
.filter input {
  flex: 1;
  margin-left: 14px;
  font-size: 26px;
}
.filter input::placeholder {
  color: #9c9c9c;
  opacity: 1;
}
.play {
  border: 10px solid transparent;
  border-left: 12px solid #8f8f8f;
  border-right: 0;
  margin-right: 22px;
}
.drop {
  border: 9px solid transparent;
  border-top: 10px solid #7b7b7b;
  border-bottom: 0;
  margin-left: 8px;
}

/* result area */
.result {
  flex: 1;
  min-height: 0;
  display: flex;
}
.modes {
  width: 57px;
  flex: none;
  padding-left: 3px;
  display: flex;
  flex-direction: column;
}
.vt {
  display: flex;
  flex-direction: column;
  align-items: center;
  gap: 10px;
  width: 40px;
  padding: 12px 0;
  font-weight: 600;
  line-height: 28px;
  color: #fff;
}
.vt span {
  writing-mode: vertical-rl;
}
.modes .vt span {
  transform: rotate(180deg);
}
.vt.on {
  height: 116px;
  border: 2px solid #a2a2a2;
}
.vt.rec {
  margin-top: auto;
  gap: 8px;
  padding-bottom: 16px;
}
.gridwrap {
  flex: 1;
  min-width: 0;
  overflow: hidden;
}
.grid {
  width: 100%;
  table-layout: fixed;
  border-collapse: separate;
  border-spacing: 0;
  font-size: 26px;
}
.c0 {
  width: 80px;
}
.c1 {
  width: 266px;
}
.c2 {
  width: 288px;
}
.c3 {
  width: 278px;
}
.c4 {
  width: 280px;
}
.c5 {
  width: 296px;
}
.c6 {
  width: 294px;
}
.grid th,
.grid td {
  height: 40px;
  padding: 0 14px 0 10px;
  line-height: 36px;
  text-align: left;
  font-weight: 400;
  white-space: nowrap;
  border-right: 2px solid #1d1d1d;
  border-bottom: 2px solid #1d1d1d;
  color: #c2c2c2;
}
.grid th {
  background: #3a4147;
  border-color: #747474;
  color: #e0e0e0;
}
.grid tbody th {
  padding: 4px 0 0 8px;
  line-height: 34px;
}
.grid thead th {
  height: 56px;
}
.grid th.cur {
  background: #62606f;
}
.grid thead th.cur {
  box-shadow: inset 0 2px #a6a6a6, inset 2px 0 #a6a6a6;
  border-color: #a6a6a6;
}
.odd td {
  background: #252525;
}
.grid .rest {
  border-right: 0;
  background: none;
}
.grid thead .rest {
  border-bottom: 0;
  background: #3a4147;
}
.grid td.num {
  text-align: right;
}
.grid td.nil {
  color: #6a6a6a;
}
.grid td.focus {
  background: #484848;
  box-shadow: inset 0 0 0 2px #fff;
  color: #fff;
}
.corner .radio {
  display: block;
  width: 20px;
  height: 20px;
  margin-left: auto;
  margin-right: -4px;
  border-radius: 50%;
  border: 2px solid #4aa843;
  background: radial-gradient(#4fae47 5px, transparent 6px);
}
.hc {
  display: flex;
  align-items: center;
  padding-bottom: 4px;
}
.type {
  width: 33px;
  flex: none;
  font-family: Roboto, sans-serif;
  font-size: 20px;
  color: #3a86c4;
}
.cname {
  margin-left: 8px;
}
.hc .mark {
  width: 14px;
  height: 14px;
  margin-left: 7px;
}
.mark + .cname {
  margin-left: 7px;
}
.hc .ref {
  margin-bottom: 12px;
}
.sort {
  margin-left: auto;
  margin-right: 4px;
  border: 9px solid transparent;
  border-top: 10px solid #3488c8;
  border-bottom: 0;
}
.panels {
  flex: none;
  width: 56px;
  padding-left: 17px;
  display: flex;
  flex-direction: column;
  gap: 16px;
  align-items: flex-start;
}
.panels .vt {
  width: 32px;
  padding: 14px 0 6px;
}
.panels .last {
  margin-top: auto;
  margin-bottom: 6px;
}
.panels button + button {
  width: 32px;
  display: grid;
  place-items: center;
}

/* actions */
.actions {
  flex: none;
  height: 56px;
  padding: 0 20px 0 7px;
  display: flex;
  align-items: center;
  gap: 12px;
  color: #d4d4d4;
}
.actions .dots {
  margin-left: 4px;
}
.actions .far {
  margin-left: 12px;
}
.actions .off {
  color: #6b6b6b;
}
.actions .off .dd,
.filterbar .off .dd {
  border-top-color: #6b6b6b;
}
.fetch {
  width: 134px;
  height: 38px;
  margin-left: 4px;
  padding-left: 4px;
  background: #48474b;
  border: 2px solid #3f3f42;
  border-bottom-color: #77777a;
  color: #ececec;
}
.count {
  margin-left: 4px;
  color: #a9a9a9;
}
.actions .count {
  gap: 14px;
}
.msg {
  margin-left: 7px;
  color: #b0b0b0;
  white-space: nowrap;
}

/* status bar */
.status {
  flex: none;
  height: 48px;
  padding-left: 6px;
  display: flex;
  align-items: center;
  color: #f0f0f0;
  border-top: 2px solid #56565a;
  margin-top: -2px;
}
.combo {
  position: relative;
  width: 286px;
  height: 40px;
  margin: 0 26px 4px 19px;
}
.combo select {
  appearance: none;
  width: 100%;
  height: 100%;
  padding-left: 16px;
  border-radius: 10px;
  background: #767677;
}
.step {
  position: absolute;
  right: 3px;
  top: 3px;
  width: 32px;
  height: 34px;
  border-radius: 8px;
  background: linear-gradient(#2470ea, #1257cf);
  pointer-events: none;
}
.crumb {
  display: flex;
  align-items: center;
  gap: 13px;
  padding-top: 3px;
  color: inherit;
  text-decoration: none;
}
.crumb.end {
  gap: 7px;
  padding-top: 0;
}
.tri {
  margin: 0 17px 0 22px;
  border: 9px solid transparent;
  border-left: 10px solid #000;
  border-right: 0;
}
.cell {
  align-self: stretch;
  border-left: 2px solid #5c5c60;
  padding-left: 11px;
  line-height: 44px;
}
.tz {
  width: 78px;
}
.lang {
  width: 691px;
  display: flex;
  align-items: center;
}
.lang .dots {
  margin-left: 9px;
}
</style>
